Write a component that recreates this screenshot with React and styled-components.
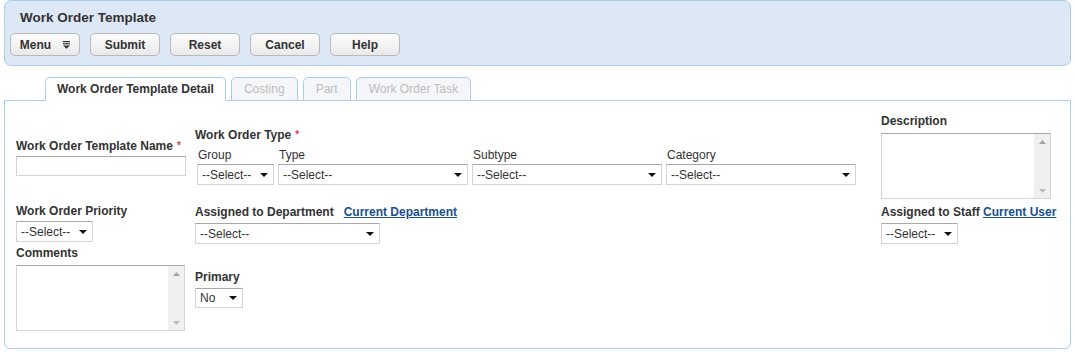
import React from "react";
import styled, { createGlobalStyle } from "styled-components";

const GlobalStyle = createGlobalStyle`
  html, body {
    margin: 0;
    padding: 0;
    background: #ffffff;
  }
  body {
    font-family: "Liberation Sans", Arial, sans-serif;
    font-size: 12px;
    color: #333333;
  }
`;

const Page = styled.div`
  padding: 0 4px;
`;

// top header with the toolbar
const Header = styled.div`
  background: #dce8f5;
  border: 1px solid #aecbea;
  border-radius: 7px;
  padding: 9px 5px 9px;
`;

const Title = styled.div`
  font-size: 13.5px;
  font-weight: bold;
  line-height: 16px;
  padding-left: 10px;
  color: #333;
`;

const Toolbar = styled.div`
  display: flex;
  gap: 10px;
  margin-top: 7px;
`;

const Button = styled.button`
  box-sizing: border-box;
  width: 70px;
  height: 23px;
  display: flex;
  align-items: center;
  justify-content: center;
  gap: 12px;
  padding: 0;
  border: 1px solid #b9b9b9;
  border-radius: 5px;
  background: linear-gradient(#fdfdfd, #e9e9e9);
  font-family: "Liberation Sans", Arial, sans-serif;
  font-size: 12px;
  font-weight: bold;
  color: #333;
`;

const TabBar = styled.div`
  display: flex;
  align-items: flex-end;
  gap: 5px;
  padding-left: 41px;
  margin-top: 11px;
  margin-bottom: -1px;
  position: relative;
  z-index: 1;
`;

const Tab = styled.div`
  box-sizing: border-box;
  height: 24px;
  line-height: 22px;
  padding: 0 ${(p) => (p.$active ? 11 : 12)}px;
  border: 1px solid #aecbea;
  border-bottom-color: ${(p) => (p.$active ? "#ffffff" : "#aecbea")};
  border-radius: 5px 5px 0 0;
  background: ${(p) => (p.$active ? "#ffffff" : "#f4f6f9")};
  color: ${(p) => (p.$active ? "#333" : "#bdbdbd")};
  font-weight: ${(p) => (p.$active ? "bold" : "normal")};
`;

const Panel = styled.div`
  box-sizing: border-box;
  height: 249px;
  border: 1px solid #aecbea;
  border-radius: 0 0 6px 6px;
  display: flex;
  padding-left: 11px;
`;

const Column = styled.div`
  display: flex;
  flex-direction: column;
  width: ${(p) => p.$w}px;
  margin-left: ${(p) => p.$ml || 0}px;
  padding-top: ${(p) => p.$pt}px;
`;

const Label = styled.div`
  font-weight: bold;
  line-height: 14px;
  white-space: nowrap;
  margin-top: ${(p) => p.$mt || 0}px;
  color: #333;
`;

const Required = styled.span`
  color: #e23a4e;
  font-size: 10px;
  margin-left: 4px;
  vertical-align: top;
`;

const Link = styled.a`
  color: #1b4f8e;
  text-decoration: underline;
  margin-left: ${(p) => p.$ml}px;
  cursor: pointer;
`;

const SubLabel = styled.div`
  line-height: 14px;
  padding-left: 1px;
  color: #333;
`;

const TypeGrid = styled.div`
  display: grid;
  grid-template-columns: 77px 190px 190px 190px;
  column-gap: 4px;
  padding-left: 2px;
  margin-top: 6px;
`;

const SubField = styled.div`
  display: flex;
  flex-direction: column;
  gap: 2px;
`;

const Input = styled.div`
  box-sizing: border-box;
  width: ${(p) => p.$w}px;
  height: ${(p) => p.$h}px;
  margin-top: ${(p) => p.$mt || 0}px;
  border: 1px solid #d4d4d4;
  border-top-color: #a8a8a8;
  background: #fff;
`;

const SelectBox = styled.div`
  box-sizing: border-box;
  width: ${(p) => (p.$w ? `${p.$w}px` : "100%")};
  height: ${(p) => p.$h || 21}px;
  margin-top: ${(p) => p.$mt || 0}px;
  display: flex;
  align-items: center;
  justify-content: space-between;
  padding: 0 5px 0 4px;
  border: 1px solid #d4d4d4;
  border-top-color: #a8a8a8;
  background: #fff;
  color: #333;
  white-space: nowrap;
`;

const Caret = styled.span`
  width: 0;
  height: 0;
  border-left: 4px solid transparent;
  border-right: 4px solid transparent;
  border-top: 4px solid #111;
`;

const TextBox = styled.div`
  box-sizing: border-box;
  width: ${(p) => p.$w}px;
  height: 66px;
  margin-top: ${(p) => p.$mt || 0}px;
  display: flex;
  justify-content: flex-end;
  border: 1px solid #d4d4d4;
  border-top-color: #a8a8a8;
  background: #fff;
`;

const ScrollTrack = styled.div`
  width: 16px;
  background: #f0f0f0;
  display: flex;
  flex-direction: column;
  justify-content: space-between;
  align-items: center;
  padding: 6px 0 5px;
`;

const Select = ({ w, h, mt, children = "--Select--" }) => (
  <SelectBox $w={w} $h={h} $mt={mt}>
    <span>{children}</span>
    <Caret />
  </SelectBox>
);

const TextArea = ({ w, mt }) => (
  <TextBox $w={w} $mt={mt}>
    <ScrollTrack>
      <svg width="7" height="4" viewBox="0 0 7 4">
        <polygon points="0,4 7,4 3.5,0" fill="#a3a3a3" />
      </svg>
      <svg width="7" height="4" viewBox="0 0 7 4">
        <polygon points="0,0 7,0 3.5,4" fill="#bcbcbc" />
      </svg>
    </ScrollTrack>
  </TextBox>
);

const MenuIcon = () => (
  <svg width="7" height="8" viewBox="0 0 7 8">
    <rect x="0" y="0" width="7" height="1.2" fill="#333" />
    <rect x="0" y="2.2" width="7" height="1.2" fill="#333" />
    <polygon points="0,4.4 7,4.4 3.5,7.8" fill="#333" />
  </svg>
);

export default function App() {
  return (
    <Page>
      <GlobalStyle />
      <Header>
        <Title>Work Order Template</Title>
        <Toolbar>
          <Button>
            <span>Menu</span>
            <MenuIcon />
          </Button>
          <Button>Submit</Button>
          <Button>Reset</Button>
          <Button>Cancel</Button>
          <Button>Help</Button>
        </Toolbar>
      </Header>

      <TabBar>
        <Tab $active>Work Order Template Detail</Tab>
        <Tab>Costing</Tab>
        <Tab>Part</Tab>
        <Tab>Work Order Task</Tab>
      </TabBar>

      <Panel>
        <Column $w={170} $pt={38}>
          <Label>
            Work Order Template Name<Required>*</Required>
          </Label>
          <Input $w={170} $h={20} $mt={3} />
          <Label $mt={28}>Work Order Priority</Label>
          <Select w={77} mt={3} />
          <Label $mt={4}>Comments</Label>
          <TextArea w={169} mt={5} />
        </Column>

        <Column $w={661} $ml={9} $pt={27}>
          <Label>
            Work Order Type<Required>*</Required>
          </Label>
          <TypeGrid>
            {["Group", "Type", "Subtype", "Category"].map((name) => (
              <SubField key={name}>
                <SubLabel>{name}</SubLabel>
                <Select />
              </SubField>
            ))}
          </TypeGrid>
          <Label $mt={20}>
            Assigned to Department<Link $ml={10}>Current Department</Link>
          </Label>
          <Select w={185} mt={4} />
          <Label $mt={26}>Primary</Label>
          <Select w={48} h={20} mt={4}>
            No
          </Select>
        </Column>

        <Column $w={180} $ml={25} $pt={13}>
          <Label>Description</Label>
          <TextArea w={170} mt={5} />
          <Label $mt={6}>
            Assigned to Staff <Link $ml={0}>Current User</Link>
          </Label>
          <Select w={77} mt={4} />
        </Column>
      </Panel>
    </Page>
  );
}
